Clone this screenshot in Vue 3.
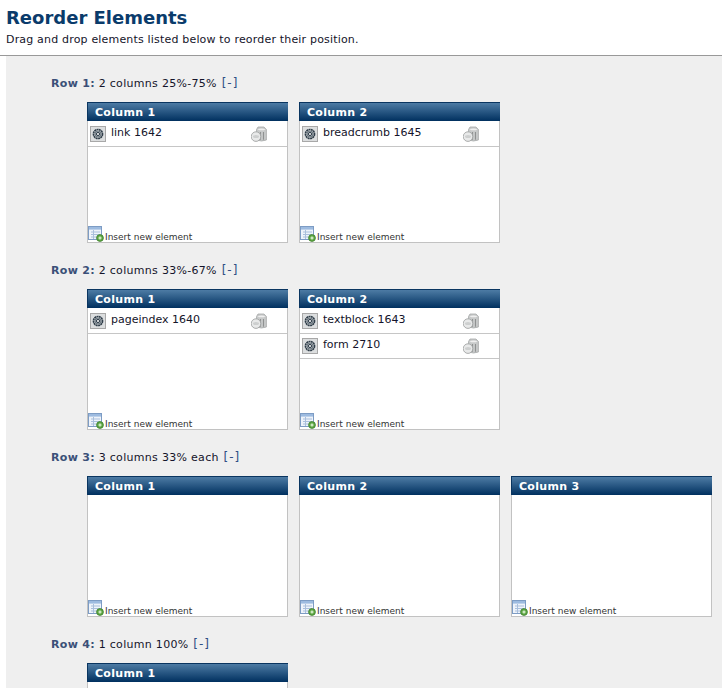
<template>
  <div class="page">
    <h1 class="title">Reorder Elements</h1>
    <p class="sub">Drag and drop elements listed below to reorder their position.</p>

    <div class="panel">
      <section v-for="row in rows" :key="row.id" class="row">
        <div class="row-head">
          <b>Row {{ row.id }}:</b> {{ row.label }} <a class="toggle">[-]</a>
        </div>

        <div class="cols">
          <div v-for="(col, i) in row.cols" :key="i" class="col">
            <div class="col-head">Column {{ i + 1 }}</div>

            <div v-for="el in col" :key="el" class="el">
              <span class="gear">
                <svg width="12" height="12" viewBox="0 0 12 12">
                  <circle cx="6" cy="6" r="4.5" fill="none" stroke="#2f3d49" stroke-width="1.7" stroke-dasharray="2 0.4" />
                  <circle cx="6" cy="6" r="3" fill="#aab2b8" stroke="#5d6a74" stroke-width="0.8" />
                  <circle cx="6" cy="6" r="1.6" fill="#e6e8e9" stroke="#2f3d49" stroke-width="1" />
                </svg>
              </span>
              <span class="el-name">{{ el }}</span>
              <svg class="bin" width="16" height="16" viewBox="0 0 16 16">
                <path d="M5.5 3.5 L7 1 H13 L15.4 3.5 V14 Q10.5 16 5.5 14 Z" fill="#c8caca" stroke="#a6a8a8" stroke-width="0.8" />
                <path d="M6.5 3.4 Q10.5 5.2 14.6 3.4 Q10.5 1.4 6.5 3.4 Z" fill="#efefef" />
                <path d="M9.5 6 V13.8 M12.5 6 V13.8" stroke="#8f9191" stroke-width="1.1" />
                <circle cx="5" cy="10.6" r="4.8" fill="#e8e9e9" stroke="#a2a4a4" stroke-width="0.9" />
                <ellipse cx="5" cy="10.6" rx="3" ry="1.5" fill="#cdcfcf" />
              </svg>
            </div>

            <div class="insert">
              <svg class="ins-icon" width="16" height="16" viewBox="0 0 16 16">
                <rect x="0.5" y="0.5" width="13" height="13" fill="#eef3fa" stroke="#7d9cc4" />
                <rect x="1" y="1" width="12" height="2.6" fill="#9dbbe0" />
                <path d="M3 6 H12 M3 8.5 H12 M3 11 H12 M5.5 4 V13" stroke="#a9bfdc" stroke-width="1" />
                <circle cx="12" cy="12" r="3.4" fill="#5fa844" stroke="#3c7d2c" stroke-width="0.8" />
                <path d="M10.4 12 H13.6 M12 10.4 V13.6" stroke="#e8f6e0" stroke-width="1.2" />
              </svg>
              <span class="ins-text">Insert new element</span>
            </div>
          </div>
        </div>
      </section>
    </div>
  </div>
</template>

<script setup>
const rows = [
  { id: 1, label: "2 columns 25%-75%", cols: [["link 1642"], ["breadcrumb 1645"]] },
  { id: 2, label: "2 columns 33%-67%", cols: [["pageindex 1640"], ["textblock 1643", "form 2710"]] },
  { id: 3, label: "3 columns 33% each", cols: [[], [], []] },
  { id: 4, label: "1 column 100%", cols: [[]] },
];
</script>

<style>
html,
body {
  overflow: hidden;
  background: #fff;
}
</style>

<style scoped>
.page {
  height: 688px;
  overflow: hidden;
  font-family: "DejaVu Sans", Verdana, sans-serif;
  font-size: 11px;
  color: #14142a;
}

.title {
  margin: 0;
  padding: 7px 0 0 6px;
  font-size: 18px;
  line-height: 22px;
  font-weight: 700;
  color: #0a3b6b;
}
.sub {
  margin: 0;
  padding: 4px 0 0 6px;
  line-height: 14px;
  height: 22px;
  border-bottom: 1px solid #999;
  letter-spacing: 0.18px;
}

.panel {
  margin-left: 6px;
  padding: 20px 0 0 45px;
  background: #efefef;
  min-height: 700px;
}

.row {
  height: 187px;
}
.row-head {
  height: 26px;
  line-height: 14px;
  letter-spacing: 0.3px;
}
.row-head b {
  color: #3b4f78;
}
.toggle {
  margin-left: 1px;
  color: #2f4f85;
  font-size: 12px;
  letter-spacing: 1px;
}

.cols {
  display: flex;
  gap: 11px;
  margin-left: 36px;
}

.col {
  position: relative;
  box-sizing: border-box;
  width: 201px;
  height: 141px;
  background: #fff;
  border: 1px solid #c2c2c2;
  border-top: 0;
}

.col-head {
  height: 19px;
  margin: 0 -1px 1px;
  padding-left: 7px;
  box-sizing: border-box;
  border-top: 1px solid #0a3560;
  border-left: 1px solid #0a3560;
  background: linear-gradient(#4d7ba4, #00305f);
  color: #fff;
  font-weight: 700;
  line-height: 19px;
  letter-spacing: 0.3px;
}

.el {
  display: flex;
  align-items: center;
  height: 25px;
  box-sizing: border-box;
  border-bottom: 1px solid #c6c6c6;
  padding: 0 20px 0 2px;
}
.gear {
  display: flex;
  align-items: center;
  justify-content: center;
  width: 16px;
  height: 16px;
  box-sizing: border-box;
  background: #dcdedf;
  border: 1px solid #a8a8a8;
}
.el-name {
  flex: 1;
  margin: -3px 0 0 5px;
}

.insert {
  position: absolute;
  left: 0;
  bottom: 0;
  display: flex;
  align-items: flex-end;
  font-size: 9px;
  line-height: 11px;
  color: #333;
}
.ins-icon {
  margin-right: 1px;
}
.ins-text {
  position: relative;
  top: 1px;
}
</style>
